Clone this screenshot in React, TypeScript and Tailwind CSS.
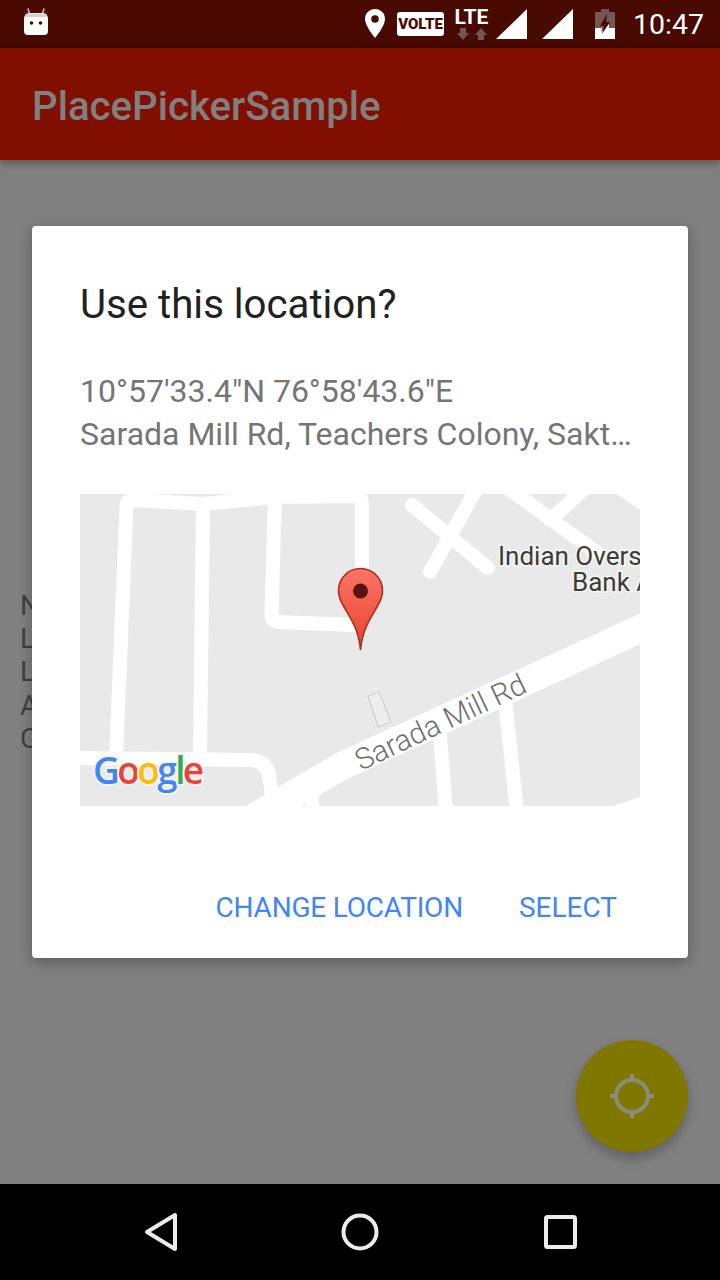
function AndroidHead() {
  return (
    <svg width="26" height="28" viewBox="0 0 26 28" className="ml-[23px]">
      <path d="M5 0.5 L6.5 6 M21 0.5 L19.5 6" stroke="#c9bcb9" strokeWidth="1.6" />
      <path d="M1 11 Q1 5 7 5 H19 Q25 5 25 11 V23 Q25 27 21 27 H5 Q1 27 1 23 Z" fill="#fff" />
      <path d="M4 5.6 H22 Q24 7 24.6 9 H1.4 Q2 7 4 5.6 Z" fill="#d9cfcd" />
      <circle cx="8.5" cy="15" r="1.8" fill="#470900" />
      <circle cx="17.5" cy="15" r="1.8" fill="#470900" />
    </svg>
  );
}

function StatusIcons() {
  return (
    <div className="ml-auto mr-[16px] flex items-start">
      {/* location pin */}
      <svg width="20" height="30" viewBox="0 0 20 30" className="mt-[9px]">
        <path
          d="M10 0 C4.4 0 0 4.4 0 10 C0 17 10 29 10 29 C10 29 20 17 20 10 C20 4.4 15.6 0 10 0 Z"
          fill="#fff"
        />
        <circle cx="10" cy="10" r="3.8" fill="#470900" />
      </svg>
      <div className="ml-[12px] mt-[12px] flex h-[24px] w-[47px] items-center justify-center rounded-[3px] bg-white text-[15px] font-black leading-none text-[#470900]">
        VOLTE
      </div>
      <div className="ml-[10px] mt-[6px] flex w-[35px] flex-col items-center">
        <span className="text-[21px] font-bold leading-[22px] text-white">LTE</span>
        <svg width="30" height="13" viewBox="0 0 30 13">
          <path d="M3 0 H9 V5 H12 L6 12 L0 5 H3 Z" fill="#775552" />
          <path d="M21 12 H27 V7 H30 L24 0 L18 7 H21 Z" fill="#775552" />
        </svg>
      </div>
      <svg width="31" height="30" viewBox="0 0 31 30" className="ml-[7px] mt-[9px]">
        <path d="M0 30 L31 0 V30 Z" fill="#fff" />
      </svg>
      <svg width="31" height="30" viewBox="0 0 31 30" className="ml-[15px] mt-[9px]">
        <path d="M0 30 L31 0 V30 Z" fill="#fff" />
      </svg>
      <svg width="20" height="30" viewBox="0 0 20 30" className="ml-[22px] mt-[9px]">
        <path d="M6 0 H14 V3 H20 V30 H0 V3 H6 Z" fill="#775552" />
        <path d="M0 19 H7 L6 23 L14 15 V19 H20 V30 H0 Z" fill="#fff" />
        <path d="M12 5 L5 17 H9 L7 25 L15 13 H11 Z" fill="#470900" />
      </svg>
      <span className="ml-[18px] text-[28.5px] leading-[50px] text-white">10:47</span>
    </div>
  );
}

function MapPreview() {
  const roads = [
    "M116 758 L126.5 506 Q127 500 133 500 L203 504 L275 497 L355 496 Q362 496 362 503 V618 Q362 625 355 625 L279 622 Q271.5 622 271.5 614 L275 497",
    "M203 504 L200 758",
    "M80 758 L250 760 Q267 761 269 775 L272 795",
    "M412 505 L488 568",
    "M430 572 L478 486",
    "M505 486 L596 552",
    "M550 520 L590 484",
    "M440 735 L446 812",
    "M505 700 L517 812",
    "M311 790 L313 812",
  ];

  return (
    <svg width="560" height="312" viewBox="80 494 560 312" className="block">
      <defs>
        <linearGradient id="pin" x1="0" y1="0" x2="0" y2="1">
          <stop offset="0" stopColor="#fb7467" />
          <stop offset="1" stopColor="#e8412c" />
        </linearGradient>
      </defs>
      <rect x="80" y="494" width="560" height="312" fill="#e9e9e9" />
      <g fill="none" stroke="#fff" strokeWidth="14" strokeLinecap="round" strokeLinejoin="round">
        {roads.map((d) => (
          <path key={d} d={d} />
        ))}
      </g>
      <path d="M670 615 L340 767 L236 828" fill="none" stroke="#fff" strokeWidth="28" />
      <path d="M617 494 H640 V510 Z M613 806 H640 V797 Z" fill="#fff" />
      <path
        d="M368 696 L379 692 L391 722 L378 727 L373 711 Z"
        fill="#ededed"
        stroke="#cfcfcf"
        strokeWidth="1.2"
      />

      <text
        x="361"
        y="771"
        transform="rotate(-25.4 361 771)"
        fontFamily="Roboto, sans-serif"
        fontWeight="300"
        fontSize="29.5"
        fill="#6f6f6f"
      >
        Sarada Mill Rd
      </text>
      <g
        fontFamily="Roboto, sans-serif"
        fontSize="26"
        fill="#3d3b38"
        stroke="#f6f6f6"
        strokeWidth="3"
        paintOrder="stroke"
      >
        <text x="498" y="565">Indian Overs</text>
        <text x="572" y="591">Bank A</text>
      </g>

      <g
        fontFamily="Open Sans, sans-serif"
        fontWeight="600"
        fontSize="37"
        stroke="#f4f4f4"
        strokeWidth="4"
        paintOrder="stroke"
        letterSpacing="-2.6"
      >
        <text x="93" y="784">
          <tspan fill="#4285f4">G</tspan>
          <tspan fill="#ea4335">o</tspan>
          <tspan fill="#fbbc05">o</tspan>
          <tspan fill="#4285f4">g</tspan>
          <tspan fill="#34a853">l</tspan>
          <tspan fill="#ea4335">e</tspan>
        </text>
      </g>

      <path
        d="M360.5 650 C358.5 628 350 618 343 605 C340 600 338.5 596 338.5 590.5 A22 22 0 0 1 382.5 590.5 C382.5 596 381 600 378 605 C371 618 362.5 628 360.5 650 Z"
        fill="url(#pin)"
        stroke="#a9301f"
        strokeWidth="1.6"
      />
      <circle cx="360.5" cy="591" r="7.5" fill="#5a130c" />
    </svg>
  );
}

export default function App() {
  return (
    <div className="relative flex h-[1280px] w-[720px] flex-col overflow-hidden bg-[#808080] font-[Roboto,sans-serif]">
      <div className="flex h-[48px] shrink-0 items-start bg-[#470900] pt-[8px]">
        <AndroidHead />
        <div className="-mt-[8px] ml-auto flex">
          <StatusIcons />
        </div>
      </div>

      <header className="z-10 flex h-[112px] shrink-0 items-center bg-[#800f00] pb-0 pl-[32px] pt-[6px] shadow-[0_3px_8px_rgba(0,0,0,0.35)]">
        <h1 className="text-[40.2px] font-medium leading-none text-[#808080]">PlacePickerSample</h1>
      </header>

      <main className="flex flex-1 flex-col justify-center pl-[20px] text-[28px] leading-[33.3px] text-[#404040]">
        <p>N</p>
        <p>L</p>
        <p>L</p>
        <p>A</p>
        <p>C</p>
      </main>

      <nav className="flex h-[96px] shrink-0 items-center bg-black">
        <div className="flex w-full justify-between pl-[143px] pr-[142px]">
          <svg width="35" height="40" viewBox="0 0 35 40">
            <path d="M32 3 V37 L4 20 Z" fill="none" stroke="#ececec" strokeWidth="4" strokeLinejoin="round" />
          </svg>
          <svg width="40" height="40" viewBox="0 0 40 40" className="-ml-[1px]">
            <circle cx="20" cy="20" r="16.5" fill="none" stroke="#ececec" strokeWidth="4" />
          </svg>
          <svg width="35" height="40" viewBox="0 0 35 40">
            <rect x="3" y="5" width="29" height="30" rx="1.5" fill="none" stroke="#ececec" strokeWidth="4" />
          </svg>
        </div>
      </nav>

      <button className="absolute left-[576px] top-[1040px] flex h-[112px] w-[112px] items-center justify-center rounded-full bg-[#807700] shadow-[0_6px_12px_rgba(0,0,0,0.25)]">
        <svg width="46" height="46" viewBox="0 0 46 46">
          <circle cx="23" cy="23" r="16" fill="none" stroke="#8b8b80" strokeWidth="4" />
          <path d="M23 1 V8 M23 38 V45 M1 23 H8 M38 23 H45" stroke="#8b8b80" strokeWidth="4" />
        </svg>
      </button>

      {/* dialog sits centred over everything above the nav bar */}
      <div className="absolute inset-x-0 bottom-[96px] top-0 flex items-center justify-center">
        <div className="w-[656px] rounded-[4px] bg-white px-[48px] pb-[33px] pt-[52px] shadow-[0_4px_14px_rgba(0,0,0,0.3)]">
          <h2 className="text-[40.2px] leading-[54px] text-[#212121]">Use this location?</h2>
          <div className="mt-[38px] text-[32px] leading-[43px] text-[#757575]">
            <p>10°57'33.4"N 76°58'43.6"E</p>
            <p className="whitespace-nowrap">Sarada Mill Rd, Teachers Colony, Sakt…</p>
          </div>
          <div className="mt-[38px]">
            <MapPreview />
          </div>
          <div className="mr-[23px] mt-[85px] flex justify-end gap-[56px] text-[28px] leading-[34px] text-[#4285f4]">
            <button className="tracking-[-0.2px]">CHANGE LOCATION</button>
            <button>SELECT</button>
          </div>
        </div>
      </div>
    </div>
  );
}
